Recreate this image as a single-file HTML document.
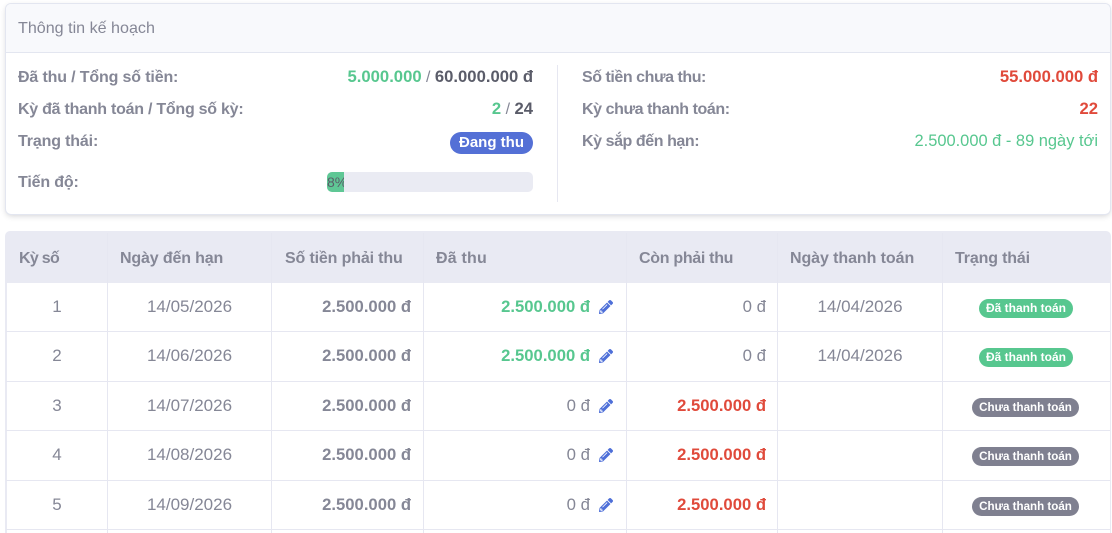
<!DOCTYPE html>
<html lang="vi">
<head>
<meta charset="utf-8">
<style>
html,body{margin:0;padding:0;background:#fff;overflow:hidden;height:533px}
#w{width:1112px;height:533px;overflow:hidden;position:relative;font-family:"Liberation Sans","DejaVu Sans",sans-serif;font-size:16px;color:#858796}
.a{position:absolute;white-space:nowrap;line-height:20px}
.r{text-align:right}
.c{text-align:center;font-size:17px}
.l{font-weight:700;letter-spacing:-.15px}
.n{font-weight:700;font-size:16.65px}
.z{font-size:16.8px}
.g{color:#57c78f}.d{color:#5a5c69}.e{color:#e04a3b}
.card{position:absolute;left:6px;top:4px;width:1104px;height:210px;background:#fff;border-radius:5px;box-shadow:0 0 0 1px #e3e6f0,0 2px 6px rgba(58,59,69,.22)}
.head{position:absolute;left:0;top:0;width:1104px;height:48px;background:#f8f9fc;border-bottom:1px solid #e3e6f0;border-radius:5px 5px 0 0}
.vl{position:absolute;background:#e6e7f1}
.hl{position:absolute;left:6px;width:1104px;height:1px;background:#e6e7f1}
.pill{position:absolute;border-radius:10px;color:#fff;font-weight:700;font-size:12px;line-height:19px;height:19px;text-align:center}
.pg{background:#57c78f;left:979px;width:94px}
.pc{background:#7f8090;left:972px;width:107px;font-size:11.6px}
svg{position:absolute;left:599px;fill:#4e6fd8}
</style>
</head>
<body>
<div id="w">
<svg width="0" height="0" style="left:0;top:0"><defs><path id="p" d="M497.900 142.100l-46.100 46.100c-4.700 4.700-12.300 4.700-17 0l-111-111c-4.700-4.700-4.700-12.300 0-17l46.100-46.100c18.700-18.700 49.100-18.700 67.900 0l60.100 60.100c18.800 18.700 18.800 49.100 0 67.900zM284.200 99.800L21.600 362.400.4 483.900c-2.900 16.400 11.400 30.600 27.800 27.800l121.500-21.300 262.600-262.600c4.700-4.700 4.700-12.300 0-17l-111-111c-4.800-4.700-12.400-4.700-17.100 0zM124.100 339.900c-5.500-5.500-5.500-14.300 0-19.800l154-154c5.500-5.500 14.300-5.500 19.800 0s5.500 14.300 0 19.800l-154 154c-5.500 5.500-14.300 5.500-19.800 0zM88 424h48v36.300l-64.500 11.300-31.100-31.100L51.700 376H88v48z"/></defs></svg>

<div class="card"><div class="head"></div></div>
<div class="a" style="left:18px;top:18px;font-size:16.1px">Thông tin kế hoạch</div>

<div class="a l" style="left:18px;top:68px">Đã thu / Tổng số tiền:</div>
<div class="a l" style="left:18px;top:100px;letter-spacing:-.25px">Kỳ đã thanh toán / Tổng số kỳ:</div>
<div class="a l" style="left:18px;top:132px">Trạng thái:</div>
<div class="a l" style="left:18px;top:173px">Tiến độ:</div>

<div class="a r" style="right:579px;top:67px"><span class="n g">5.000.000</span> / <span class="n d">60.000.000 đ</span></div>
<div class="a r" style="right:579px;top:99px"><span class="n g">2</span> / <span class="n d">24</span></div>
<div class="pill" style="left:450px;top:132px;width:83px;height:22px;line-height:21px;border-radius:11px;background:#5470d6;font-size:15px">Đang thu</div>
<div style="position:absolute;left:327px;top:172px;width:206px;height:20px;background:#eaebf3;border-radius:5px;overflow:hidden"><div style="width:16.5px;height:20px;background:#5fc795"></div></div>
<div class="a" style="left:327px;top:172px;font-size:14px;width:17px;overflow:hidden;color:#5a5c69">8%</div>

<div class="vl" style="left:557px;top:65px;width:1px;height:137px"></div>

<div class="a l" style="left:582px;top:68px;letter-spacing:-.45px">Số tiền chưa thu:</div>
<div class="a l" style="left:582px;top:100px;letter-spacing:-.42px">Kỳ chưa thanh toán:</div>
<div class="a l" style="left:582px;top:132px;letter-spacing:-.43px">Kỳ sắp đến hạn:</div>
<div class="a r e n" style="right:14px;top:67px">55.000.000 đ</div>
<div class="a r e n" style="right:14px;top:99px">22</div>
<div class="a r g" style="right:14px;top:131px;font-size:16.45px">2.500.000 đ - 89 ngày tới</div>

<!-- table -->
<div style="position:absolute;left:5px;top:231px;width:1106px;height:302px;background:#e9eaf3;border-radius:5px 5px 0 0"></div>
<div style="position:absolute;left:7px;top:283px;width:1103px;height:250px;background:#fff"></div>
<div class="vl" style="left:107px;top:233px;width:1px;height:300px"></div>
<div class="vl" style="left:271px;top:233px;width:1px;height:300px"></div>
<div class="vl" style="left:423px;top:233px;width:1px;height:300px"></div>
<div class="vl" style="left:626px;top:233px;width:1px;height:300px"></div>
<div class="vl" style="left:777px;top:233px;width:1px;height:300px"></div>
<div class="vl" style="left:942px;top:233px;width:1px;height:300px"></div>
<div class="hl" style="top:331px"></div>
<div class="hl" style="top:381px"></div>
<div class="hl" style="top:430px"></div>
<div class="hl" style="top:480px"></div>
<div class="hl" style="top:529px"></div>

<div class="a l" style="left:19px;top:249px;letter-spacing:-.7px">Kỳ số</div>
<div class="a l" style="left:120px;top:249px">Ngày đến hạn</div>
<div class="a l" style="left:285px;top:249px">Số tiền phải thu</div>
<div class="a l" style="left:436px;top:249px;letter-spacing:.2px">Đã thu</div>
<div class="a l" style="left:639px;top:249px;letter-spacing:-.3px">Còn phải thu</div>
<div class="a l" style="left:790px;top:249px;letter-spacing:-.08px">Ngày thanh toán</div>
<div class="a l" style="left:955px;top:249px">Trạng thái</div>

<!-- row 1 -->
<div class="a c" style="left:7px;width:100px;top:297px">1</div>
<div class="a c" style="left:108px;width:163px;top:297px">14/05/2026</div>
<div class="a r n" style="right:701px;top:297px">2.500.000 đ</div>
<div class="a r g n" style="right:522px;top:297px">2.500.000 đ</div>
<svg style="top:300px" width="14" height="14" viewBox="0 0 512 512"><use href="#p"/></svg>
<div class="a r z" style="right:346px;top:297px">0 đ</div>
<div class="a c" style="left:778px;width:164px;top:297px">14/04/2026</div>
<div class="pill pg" style="top:299px">Đã thanh toán</div>

<!-- row 2 -->
<div class="a c" style="left:7px;width:100px;top:346px">2</div>
<div class="a c" style="left:108px;width:163px;top:346px">14/06/2026</div>
<div class="a r n" style="right:701px;top:346px">2.500.000 đ</div>
<div class="a r g n" style="right:522px;top:346px">2.500.000 đ</div>
<svg style="top:349px" width="14" height="14" viewBox="0 0 512 512"><use href="#p"/></svg>
<div class="a r z" style="right:346px;top:346px">0 đ</div>
<div class="a c" style="left:778px;width:164px;top:346px">14/04/2026</div>
<div class="pill pg" style="top:348px">Đã thanh toán</div>

<!-- row 3 -->
<div class="a c" style="left:7px;width:100px;top:396px">3</div>
<div class="a c" style="left:108px;width:163px;top:396px">14/07/2026</div>
<div class="a r n" style="right:701px;top:396px">2.500.000 đ</div>
<div class="a r z" style="right:522px;top:396px">0 đ</div>
<svg style="top:399px" width="14" height="14" viewBox="0 0 512 512"><use href="#p"/></svg>
<div class="a r e n" style="right:346px;top:396px">2.500.000 đ</div>
<div class="pill pc" style="top:398px">Chưa thanh toán</div>

<!-- row 4 -->
<div class="a c" style="left:7px;width:100px;top:445px">4</div>
<div class="a c" style="left:108px;width:163px;top:445px">14/08/2026</div>
<div class="a r n" style="right:701px;top:445px">2.500.000 đ</div>
<div class="a r z" style="right:522px;top:445px">0 đ</div>
<svg style="top:448px" width="14" height="14" viewBox="0 0 512 512"><use href="#p"/></svg>
<div class="a r e n" style="right:346px;top:445px">2.500.000 đ</div>
<div class="pill pc" style="top:447px">Chưa thanh toán</div>

<!-- row 5 -->
<div class="a c" style="left:7px;width:100px;top:495px">5</div>
<div class="a c" style="left:108px;width:163px;top:495px">14/09/2026</div>
<div class="a r n" style="right:701px;top:495px">2.500.000 đ</div>
<div class="a r z" style="right:522px;top:495px">0 đ</div>
<svg style="top:498px" width="14" height="14" viewBox="0 0 512 512"><use href="#p"/></svg>
<div class="a r e n" style="right:346px;top:495px">2.500.000 đ</div>
<div class="pill pc" style="top:497px">Chưa thanh toán</div>
</div>
</body>
</html>
